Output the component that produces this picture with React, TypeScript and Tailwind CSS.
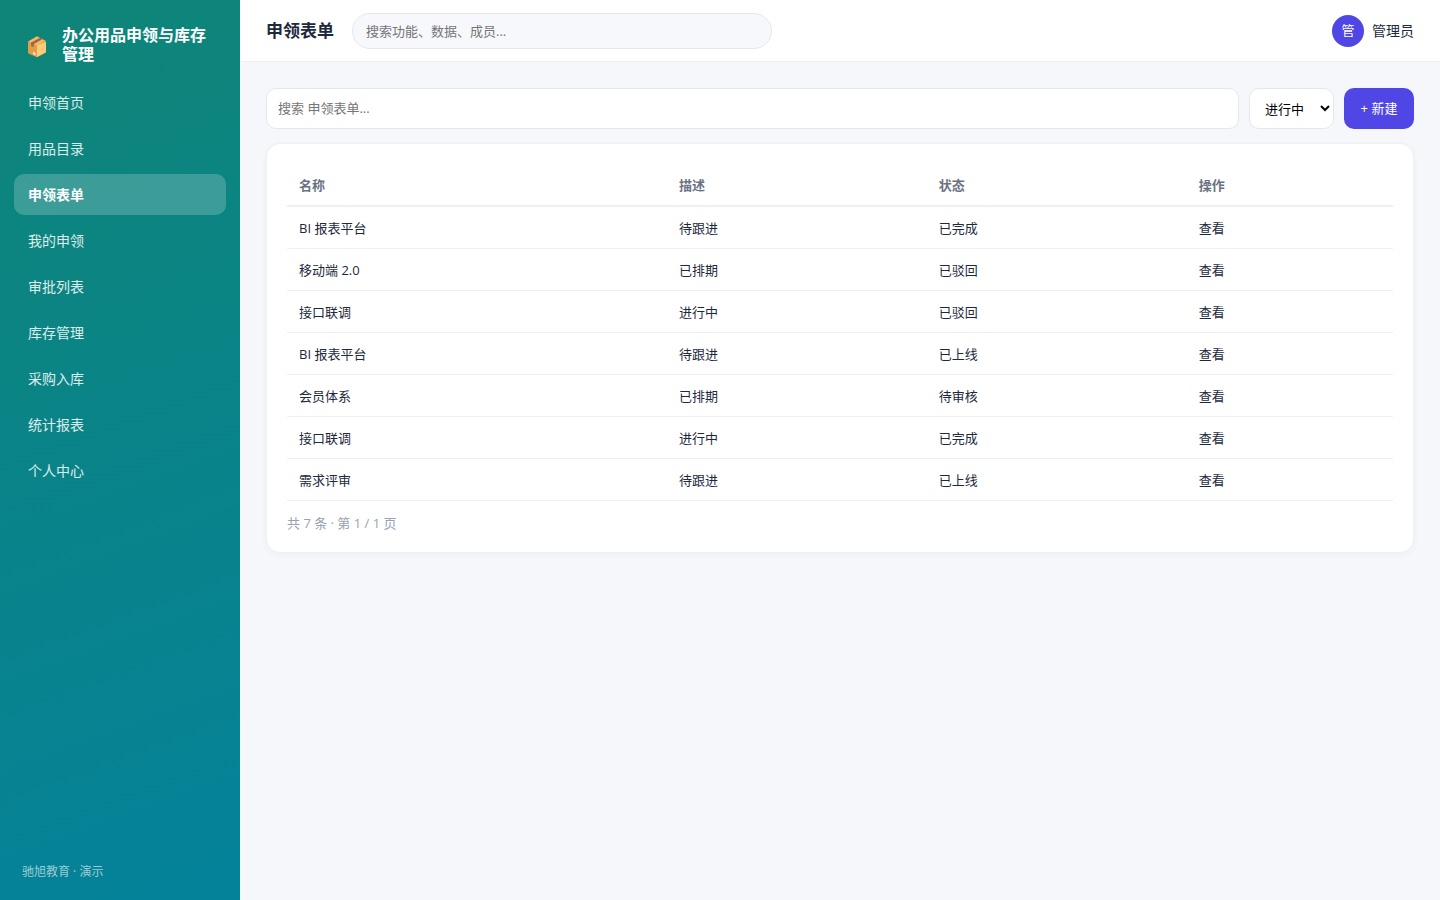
import { clsx } from "clsx";

const FONT = "font-['Open_Sans','Noto_Sans_CJK_SC',sans-serif]";

const menus = [
  "申领首页",
  "用品目录",
  "申领表单",
  "我的申领",
  "审批列表",
  "库存管理",
  "采购入库",
  "统计报表",
  "个人中心",
];

interface FormRow {
  name: string;
  desc: string;
  status: string;
}

const columns = ["名称", "描述", "状态", "操作"];

const rows: FormRow[] = [
  { name: "BI 报表平台", desc: "待跟进", status: "已完成" },
  { name: "移动端 2.0", desc: "已排期", status: "已驳回" },
  { name: "接口联调", desc: "进行中", status: "已驳回" },
  { name: "BI 报表平台", desc: "待跟进", status: "已上线" },
  { name: "会员体系", desc: "已排期", status: "待审核" },
  { name: "接口联调", desc: "进行中", status: "已完成" },
  { name: "需求评审", desc: "待跟进", status: "已上线" },
];

function BoxIcon() {
  return (
    <svg viewBox="0 -2 30 26" className="h-[26px] w-[30px] shrink-0" aria-hidden="true">
      <path d="M6 7.5 15 11v12.2L6.6 19.4Q6 19 6 18.2Z" fill="#e59c48" />
      <path d="M24 7.5 15 11v12.2l8.4-4.4q.6-.4.6-1.2Z" fill="#ffcb79" />
      <path d="M6 7.5 15 2.2l9 4.9-9 4.4Z" fill="#f5b962" />
      <path d="m8.8 8.7 9.3-5 2.6 1.4-8.9 5v3l-1.3-.7-1.1.2Z" fill="#a0624a" />
      <path d="m11 17.6 2.6 1.3v2.6L11 20.2Z" fill="#e6dfd6" />
    </svg>
  );
}

function Sidebar({ active }: { active: string }) {
  return (
    <aside className="flex w-60 shrink-0 flex-col bg-[linear-gradient(160deg,#0f8577,#04829a)] px-3.5 text-white">
      <div className="flex items-center gap-2.5 px-2 pt-[26px] pb-[18px]">
        <BoxIcon />
        <span className="text-base leading-[19px] font-bold">办公用品申领与库存管理</span>
      </div>
      <nav className="flex flex-col gap-[5px]">
        {menus.map((menu) => (
          <a
            key={menu}
            href="#"
            aria-current={menu === active ? "page" : undefined}
            className={clsx(
              "flex h-[41px] items-center rounded-[10px] px-3.5 text-sm",
              menu === active ? "bg-white/20 font-bold" : "text-white/85",
            )}
          >
            {menu}
          </a>
        ))}
      </nav>
      <p className="mt-auto px-2 pb-[19px] text-xs leading-[18px] text-white/60">驰旭教育 · 演示</p>
    </aside>
  );
}

function Topbar({ title }: { title: string }) {
  return (
    <header className="flex h-[62px] items-center gap-[18px] border-b border-[#eceef4] bg-white px-[26px]">
      <h1 className="text-[17px] font-bold">{title}</h1>
      <input
        type="search"
        aria-label="全局搜索"
        placeholder="搜索功能、数据、成员..."
        className="h-9 w-[420px] rounded-full border border-[#e5e7f0] bg-[#f6f8fc] px-[13px] text-[13px] placeholder:text-[#757575]"
      />
      <div className="ml-auto flex items-center gap-2 text-sm">
        <span className="flex size-8 items-center justify-center rounded-full bg-[#4f46e5] text-[13px] text-white">
          管
        </span>
        <span>管理员</span>
      </div>
    </header>
  );
}

function FormTable() {
  return (
    <section className="rounded-[14px] border border-[#eef0f6] bg-white p-5 shadow-[0_2px_6px_rgba(30,41,59,0.04)]">
      <table className="w-full text-left text-[13px] leading-[17px]">
        <thead>
          <tr className="border-b-2 border-[#eef0f6] text-gray-500">
            {columns.map((column) => (
              <th key={column} className="px-3 pt-[13px] pb-[11px] font-bold first:w-[380px]">
                {column}
              </th>
            ))}
          </tr>
        </thead>
        <tbody>
          {rows.map((row, index) => (
            <tr key={index} className="border-b border-[#eef0f3]">
              <td className="px-3 pt-[13px] pb-[11px]">{row.name}</td>
              <td className="px-3 pt-[13px] pb-[11px]">{row.desc}</td>
              <td className="px-3 pt-[13px] pb-[11px]">{row.status}</td>
              <td className="px-3 pt-[13px] pb-[11px]">
                <a href="#">查看</a>
              </td>
            </tr>
          ))}
        </tbody>
      </table>
      <p className="mt-[13px] text-[13px] leading-[18px] text-[#98a2b3]">共 7 条 · 第 1 / 1 页</p>
    </section>
  );
}

function App() {
  return (
    <div className={clsx("flex min-h-screen bg-[#f5f7fb] text-slate-800", FONT)}>
      <Sidebar active="申领表单" />
      <div className="min-w-0 flex-1">
        <Topbar title="申领表单" />
        <main className="flex flex-col gap-3.5 p-[26px]">
          <div className="flex h-[41px] gap-2.5 text-[13px]">
            <input
              type="search"
              aria-label="搜索申领表单"
              placeholder="搜索 申领表单..."
              className="min-w-0 flex-1 rounded-[10px] border border-[#e5e7f0] bg-white px-[11px] placeholder:text-[#757575]"
            />
            <select
              aria-label="状态"
              defaultValue="进行中"
              className="rounded-[10px] border border-[#e5e7f0] bg-white pr-3 pl-[11px] text-black"
            >
              <option>进行中</option>
              <option>已完成</option>
            </select>
            <button type="button" className="min-w-[70px] rounded-[10px] bg-[#4f46e5] px-4 text-white">
              + 新建
            </button>
          </div>
          <FormTable />
        </main>
      </div>
    </div>
  );
}

export default App;
